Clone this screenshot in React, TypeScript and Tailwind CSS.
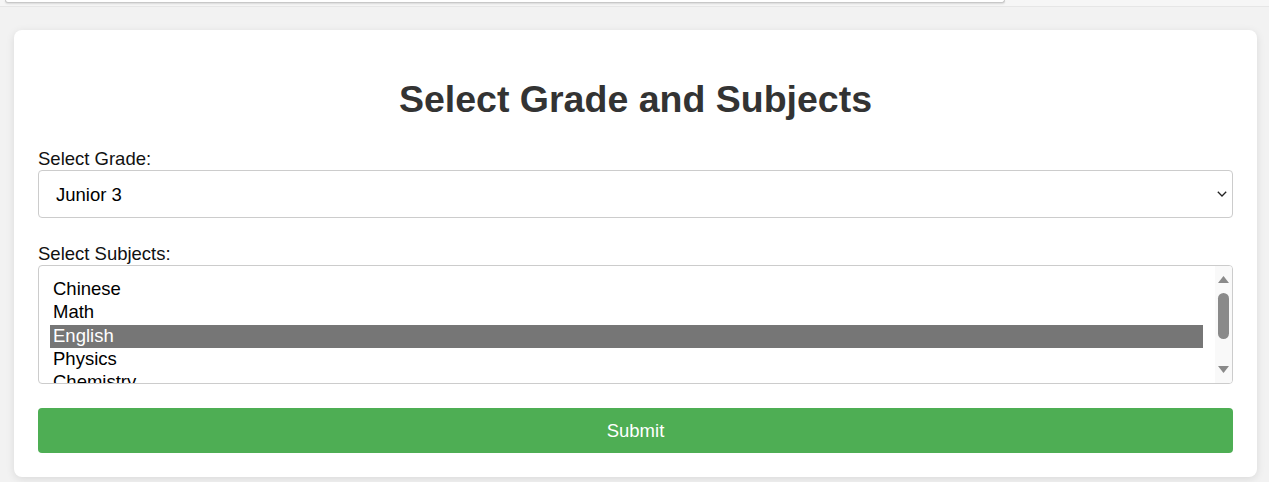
import React from "react";

const subjects = ["Chinese", "Math", "English", "Physics", "Chemistry"];

export default function App() {
  return (
    <div
      className="min-h-[482px] w-[1269px] overflow-hidden bg-[#f2f2f2] text-black"
      style={{ fontFamily: '"Liberation Sans", Arial, Helvetica, sans-serif' }}
    >
      <div className="h-[7px] border-b border-[#e6e6e6] bg-[#f6f6f6]">
        <div className="ml-[5px] h-[3px] w-[1000px] rounded-b-[5px] border-b border-x border-[#c8c8c8] bg-white shadow-[0_1px_2px_rgba(0,0,0,0.12)]" />
      </div>
      <div className="ml-[14px] mt-[23px] w-[1243px] rounded-[8px] bg-white px-[24px] pb-[24px] pt-[24px] shadow-[0_2px_8px_rgba(0,0,0,0.1)]">
        <h1 className="mt-[24px] h-[43px] text-center text-[37.5px] font-bold leading-[43px] text-[#333]">
          Select Grade and Subjects
        </h1>
        <label className="mt-[27px] block h-[21px] text-[18.5px] leading-[21px] text-[#111]">Select Grade:</label>
        <div className="mt-[1px] flex h-[48px] items-center justify-between rounded-[4px] border border-[#ccc] bg-white pl-[17px] pr-[5px]">
          <span className="text-[18.5px] leading-[21px] text-black">Junior 3</span>
          <svg width="10" height="6" viewBox="0 0 10 6">
            <polyline points="0.8,0.8 5,5 9.2,0.8" fill="none" stroke="#222" strokeWidth="1.3" />
          </svg>
        </div>
        <label className="mt-[25px] block h-[21px] text-[18.5px] leading-[21px] text-[#111]">Select Subjects:</label>
        <div className="mt-[1px] flex h-[119px] overflow-hidden rounded-[4px] border border-[#ccc] bg-white">
          <div className="flex-1 overflow-hidden py-[12px] pl-[11px] pr-[12px]">
            {subjects.map((s) => (
              <div
                key={s}
                className={
                  "h-[23.33px] pb-[2px] pl-[3px] text-[18.5px] leading-[21px] " +
                  (s === "English" ? "bg-[#767676] text-white" : "text-black")
                }
              >
                {s}
              </div>
            ))}
          </div>
          <div className="relative w-[17px] bg-[#f9f9f9]">
            <svg width="11" height="7" viewBox="0 0 11 7" className="absolute left-[3px] top-[10px]">
              <polygon points="5.5,0 11,7 0,7" fill="#8a8a8a" />
            </svg>
            <div className="absolute left-[3px] top-[27px] h-[46px] w-[11px] rounded-full bg-[#8a8a8a]" />
            <svg width="11" height="7" viewBox="0 0 11 7" className="absolute left-[3px] top-[100px]">
              <polygon points="0,0 11,0 5.5,7" fill="#8a8a8a" />
            </svg>
          </div>
        </div>
        <button className="mt-[24px] flex h-[45px] w-full items-center justify-center rounded-[4px] bg-[#4eae54] text-[18.5px] leading-[21px] text-white">
          Submit
        </button>
      </div>
    </div>
  );
}
